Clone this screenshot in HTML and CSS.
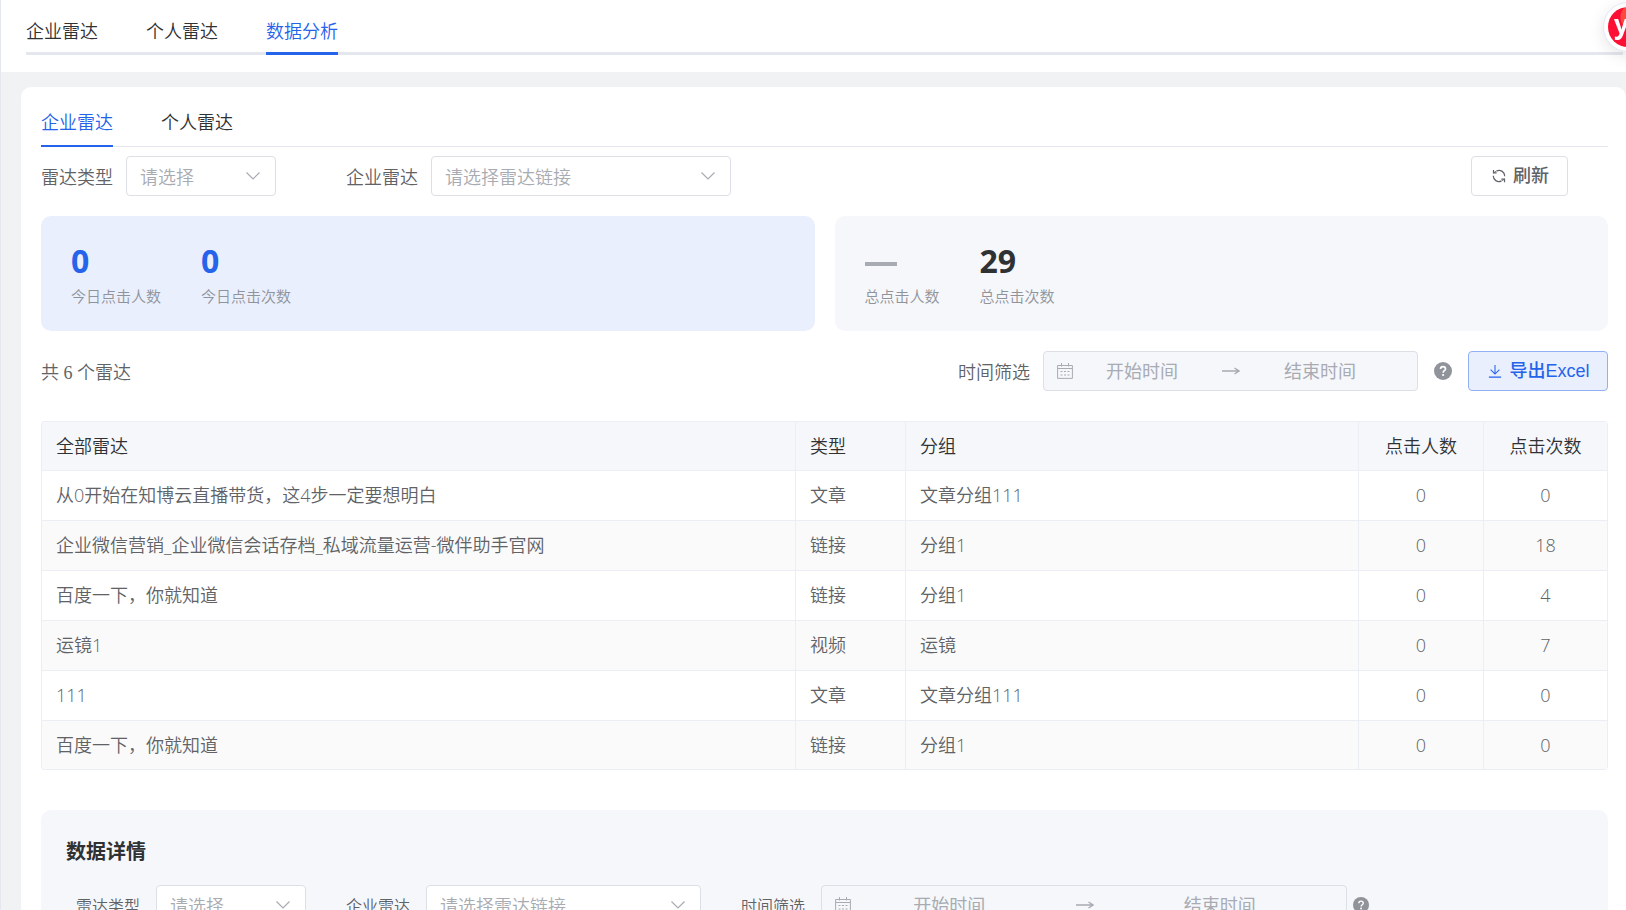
FILE: index.html
```html
<!DOCTYPE html>
<html lang="zh-CN">
<head>
    <meta charset="UTF-8">
    <meta name="viewport" content="width=device-width, initial-scale=1.0">
    <title>数据分析</title>
    <link rel="stylesheet" href="styles.css">
</head>
<body>

    <!-- 图标 -->
    <svg class="sprite" aria-hidden="true">
        <symbol id="icon-arrow-down" viewBox="0 0 16 16">
            <path d="M1.5 4.5 8 11l6.500-6.500" fill="none" stroke="currentColor" stroke-width="1.200"/>
        </symbol>
        <symbol id="icon-refresh" viewBox="0 0 16 16">
            <path d="M5.500 2.100A6.500 6.500 0 0 1 14.500 8.200M10.500 13.900A6.500 6.500 0 0 1 1.500 7.800M1.700 1v3.400h3.600M14.300 15v-3.400h-3.600" fill="none" stroke="currentColor" stroke-width="1.400"/>
            <path d="M1.700 4.400 5.500 2.100M14.300 11.600l-3.800 2.300" fill="none" stroke="currentColor"/>
        </symbol>
        <symbol id="icon-download" viewBox="0 0 16 16">
            <path d="M8 1v10M3 6.500l5 5 5-5M1 15h14" fill="none" stroke="currentColor" stroke-width="1.200"/>
        </symbol>
        <symbol id="icon-date" viewBox="0 0 16 16">
            <path d="M.6 2.500h14.800v12.900H.6zM.6 5.500h14.800M4.500 0v3.500M11.500 0v3.500" fill="none" stroke="currentColor"/>
            <path d="M3.500 8.500h2M7 8.500h2M10.500 8.500h2M3.500 12h2M7 12h2M10.500 12h2" stroke="currentColor" stroke-width="1.200"/>
        </symbol>
        <symbol id="icon-right" viewBox="0 0 18 18">
            <path d="M0 9h17M12.500 6l4.500 3-4.500 3" fill="none" stroke="currentColor" stroke-width="1.400"/>
        </symbol>
        <symbol id="icon-question" viewBox="0 0 18 18">
            <circle cx="9" cy="9" r="9" fill="currentColor"/>
            <path d="M6.500 7.100C6.500 5.500 7.600 4.600 9 4.600s2.500.9 2.500 2.300c0 1.700-2.400 1.900-2.400 3.800" fill="none" stroke="#fff" stroke-width="1.600"/>
            <circle cx="9.100" cy="13" r="1.100" fill="#fff"/>
        </symbol>
    </svg>

    <!-- 顶部导航 -->
    <header class="top">
        <nav class="top-tabs">
            <a class="tab" href="#">企业雷达</a>
            <a class="tab" href="#">个人雷达</a>
            <a class="tab active" href="#">数据分析</a>
        </nav>
    </header>

    <button class="float-btn" type="button" aria-label="助手"><span>y</span></button>

    <main class="card">
        <nav class="sub-tabs">
            <a class="tab active" href="#">企业雷达</a>
            <a class="tab" href="#">个人雷达</a>
        </nav>

        <!-- 筛选 -->
        <div class="filters">
            <label for="type">雷达类型</label>
            <div class="select select-type">
                <select id="type"><option>请选择</option></select>
                <svg><use href="#icon-arrow-down"/></svg>
            </div>
            <label class="label-next" for="radar">企业雷达</label>
            <div class="select select-radar">
                <select id="radar"><option>请选择雷达链接</option></select>
                <svg><use href="#icon-arrow-down"/></svg>
            </div>
            <button class="btn btn-refresh" type="button"><svg><use href="#icon-refresh"/></svg>刷新</button>
        </div>

        <!-- 统计 -->
        <div class="stats">
            <div class="stat-box today">
                <div class="stat"><strong>0</strong><span>今日点击人数</span></div>
                <div class="stat"><strong>0</strong><span>今日点击次数</span></div>
            </div>
            <div class="stat-box">
                <div class="stat"><strong><i class="dash"></i></strong><span>总点击人数</span></div>
                <div class="stat"><strong>29</strong><span>总点击次数</span></div>
            </div>
        </div>

        <div class="toolbar">
            <p class="count">共 6 个雷达</p>
            <label for="start">时间筛选</label>
            <div class="range">
                <svg class="range-date"><use href="#icon-date"/></svg>
                <input id="start" type="text" placeholder="开始时间">
                <span class="range-sep"><svg><use href="#icon-right"/></svg></span>
                <input type="text" placeholder="结束时间" aria-label="结束时间">
            </div>
            <svg class="help"><use href="#icon-question"/></svg>
            <button class="btn btn-export" type="button"><svg><use href="#icon-download"/></svg>导出Excel</button>
        </div>

        <!-- 雷达列表 -->
        <table class="radar-table">
            <colgroup>
                <col>
                <col class="col-type">
                <col class="col-group">
                <col class="col-num">
                <col class="col-last">
            </colgroup>
            <thead>
                <tr><th>全部雷达</th><th>类型</th><th>分组</th><th class="num">点击人数</th><th class="num">点击次数</th></tr>
            </thead>
            <tbody>
                <tr><td>从0开始在知博云直播带货，这4步一定要想明白</td><td>文章</td><td>文章分组111</td><td class="num">0</td><td class="num">0</td></tr>
                <tr><td>企业微信营销_企业微信会话存档_私域流量运营-微伴助手官网</td><td>链接</td><td>分组1</td><td class="num">0</td><td class="num">18</td></tr>
                <tr><td>百度一下，你就知道</td><td>链接</td><td>分组1</td><td class="num">0</td><td class="num">4</td></tr>
                <tr><td>运镜1</td><td>视频</td><td>运镜</td><td class="num">0</td><td class="num">7</td></tr>
                <tr><td>111</td><td>文章</td><td>文章分组111</td><td class="num">0</td><td class="num">0</td></tr>
                <tr><td>百度一下，你就知道</td><td>链接</td><td>分组1</td><td class="num">0</td><td class="num">0</td></tr>
            </tbody>
        </table>

        <!-- 数据详情 -->
        <section class="detail">
            <h2>数据详情</h2>
            <div class="filters detail-filters">
                <label for="detail-type">雷达类型</label>
                <div class="select select-type">
                    <select id="detail-type"><option>请选择</option></select>
                    <svg><use href="#icon-arrow-down"/></svg>
                </div>
                <label class="label-next" for="detail-radar">企业雷达</label>
                <div class="select select-radar">
                    <select id="detail-radar"><option>请选择雷达链接</option></select>
                    <svg><use href="#icon-arrow-down"/></svg>
                </div>
                <label class="label-next" for="detail-start">时间筛选</label>
                <div class="range">
                    <svg class="range-date"><use href="#icon-date"/></svg>
                    <input id="detail-start" type="text" placeholder="开始时间">
                    <span class="range-sep"><svg><use href="#icon-right"/></svg></span>
                    <input type="text" placeholder="结束时间" aria-label="结束时间">
                </div>
                <svg class="help"><use href="#icon-question"/></svg>
            </div>
        </section>
    </main>

</body>
</html>
```
FILE: styles.css
```css
* {
    box-sizing: border-box;
}

body {
    margin: 0;
    height: 100vh;
    overflow: hidden;
    border-left: 1px solid #e4e7ed;
    background-color: #f1f2f4;
    color: #606266;
    font-family: "Noto Sans CJK SC", sans-serif;
    font-size: 18px;
    font-weight: 350;
    line-height: 24px;
}

svg {
    display: block;
    flex: none;
}

.sprite {
    position: absolute;
    width: 0;
    height: 0;
}

/* 顶部导航 */
.top {
    height: 72px;
    padding: 0 3px 0 25px;
    background-color: #fff;
}

.top-tabs,
.sub-tabs {
    display: flex;
    gap: 48px;
}

.tab {
    color: #303133;
    text-decoration: none;
}

.tab.active {
    color: #2563eb;
}

.top-tabs {
    height: 55px;
    border-bottom: 3px solid #e4e7ed;
}

.top-tabs .tab {
    height: 55px;
    padding-top: 18px;
}

.top-tabs .active {
    border-bottom: 3px solid #2563eb;
}

/* 右上角悬浮按钮 */
.float-btn {
    position: fixed;
    top: 2px;
    right: -27px;
    width: 50px;
    height: 50px;
    padding: 4px;
    border: 1px solid #e4e6fa;
    border-radius: 50%;
    background-color: #fff;
    box-shadow: 0 4px 16px rgba(0, 0, 0, 0.1);
}

.float-btn span {
    display: block;
    height: 40px;
    padding-left: 6px;
    border-radius: 50%;
    background: radial-gradient(circle at 25px 10px, #ff4a3f 12px, #fc1034 13px);
    color: #fff;
    font: bold 26px/34px "Noto Sans", sans-serif;
    text-align: left;
}

/* 主体卡片 */
.card {
    margin: 15px 0 0 20px;
    padding: 0 18px 40px 20px;
    border-radius: 10px;
    background-color: #fff;
}

.sub-tabs {
    height: 60px;
    border-bottom: 1px solid #e4e7ed;
}

.sub-tabs .tab {
    height: 60px;
    padding-top: 22px;
}

.sub-tabs .active {
    border-bottom: 2px solid #2563eb;
}

/* 筛选 */
.filters {
    display: flex;
    align-items: center;
    margin-top: 9px;
}

.select {
    position: relative;
    height: 40px;
    margin-left: 13px;
}

.select-type {
    width: 150px;
}

.select-radar {
    width: 300px;
}

.select select {
    width: 100%;
    height: 40px;
    padding: 0 40px 0 13px;
    border: 1px solid #dcdfe6;
    border-radius: 4px;
    appearance: none;
    background-color: #fff;
    color: #a8abb2;
    font: inherit;
}

.select svg {
    position: absolute;
    top: 12px;
    right: 15px;
    width: 16px;
    height: 16px;
    color: #a8abb2;
    pointer-events: none;
}

.label-next {
    margin-left: 70px;
}

.btn {
    display: flex;
    align-items: center;
    justify-content: center;
    gap: 7px;
    height: 40px;
    padding: 0 0 4px 2px;
    border: 1px solid #dcdfe6;
    border-radius: 4px;
    background-color: #fff;
    color: #606266;
    font-family: "Liberation Sans", "Noto Sans CJK SC", sans-serif;
    font-size: 18px;
    font-weight: 500;
    cursor: pointer;
}

.btn svg {
    width: 14px;
    height: 14px;
    margin-top: 4px;
}

.btn-refresh {
    width: 97px;
    margin-left: auto;
    margin-right: 40px;
}

.btn-export {
    width: 140px;
    border-color: #92b1f5;
    background-color: #e9effd;
    color: #2563eb;
}

/* 统计 */
.stats {
    display: flex;
    gap: 20px;
    margin-top: 20px;
}

.stat-box {
    display: flex;
    flex: 1;
    gap: 40px;
    height: 115px;
    padding: 27px 30px;
    border-radius: 10px;
    background-color: #f5f7fb;
}

.stat strong {
    display: flex;
    align-items: center;
    height: 36px;
    color: #303133;
    font: bold 32px/36px "Noto Sans", sans-serif;
}

.today {
    background-color: #e9effd;
}

.today strong {
    color: #2563eb;
}

.stat span {
    display: block;
    margin-top: 6px;
    color: #909399;
    font-size: 15px;
    line-height: 22px;
}

.dash {
    width: 32px;
    height: 4px;
    margin-top: 6px;
    background-color: #a8abb2;
}

.toolbar {
    display: flex;
    align-items: center;
    margin-top: 20px;
}

.count {
    margin: 0 auto 0 0;
    padding-top: 3px;
    font-family: "Liberation Serif", "Noto Sans CJK SC", serif;
}

/* 时间范围 */
.range {
    display: flex;
    align-items: center;
    width: 375px;
    height: 40px;
    margin-left: 13px;
    padding: 0 28px 0 13px;
    border: 1px solid #dcdfe6;
    border-radius: 4px;
    background-color: #f5f7fb;
    color: #a8abb2;
}

.range-date {
    width: 16px;
    height: 16px;
}

.range input {
    flex: 1;
    min-width: 0;
    padding: 0 0 2px;
    border: none;
    background: none;
    font: inherit;
    font-weight: 400;
    text-align: center;
}

.range input::placeholder {
    color: #a8abb2;
}

.range-sep {
    display: flex;
    justify-content: center;
    width: 40px;
}

.range-sep svg {
    width: 18px;
    height: 18px;
}

.help {
    width: 18px;
    height: 18px;
    margin: 0 16px;
    color: #909399;
}

/* 雷达列表 */
.radar-table {
    width: 100%;
    margin-top: 30px;
    border: 1px solid #ebeef5;
    border-right: none;
    border-radius: 4px;
    border-spacing: 0;
    table-layout: fixed;
    overflow: hidden;
    font-family: "Open Sans", "Noto Sans CJK SC", sans-serif;
}

.col-type {
    width: 110px;
}

.col-group {
    width: 453px;
}

.col-num {
    width: 125px;
}

.col-last {
    width: 124px;
}

.radar-table th,
.radar-table td {
    height: 50px;
    padding: 0 14px;
    border-right: 1px solid #ebeef5;
    border-bottom: 1px solid #ebeef5;
    font-weight: 350;
    text-align: left;
}

.radar-table th {
    height: 49px;
    background-color: #f5f7fb;
    color: #303133;
}

.radar-table tbody tr:last-child td {
    height: 48px;
    border-bottom: none;
}

.radar-table tbody tr:nth-child(even) td {
    background-color: #fafafa;
}

.radar-table td {
    padding-bottom: 1px;
}

.radar-table th.num,
.radar-table td.num {
    text-align: center;
}

/* 数据详情 */
.detail {
    margin-top: 40px;
    padding: 25px 25px 40px;
    border-radius: 10px;
    background-color: #f5f7fb;
}

.detail h2 {
    margin: 0;
    color: #303133;
    font-size: 20px;
    font-weight: 700;
    line-height: 32px;
}

.detail-filters {
    margin-top: 18px;
    padding-left: 10px;
}

.detail-filters label {
    font-size: 16px;
}

.detail-filters .select,
.detail-filters .range {
    margin-left: 16px;
}

.detail-filters .label-next {
    margin-left: 40px;
}

.detail-filters .select-radar {
    width: 275px;
}

.detail-filters .range {
    flex: 1;
    max-width: 526px;
}

.detail-filters .range-sep {
    width: 74px;
}

.detail-filters .help {
    width: 16px;
    height: 16px;
    margin: 0 0 0 6px;
}
```
